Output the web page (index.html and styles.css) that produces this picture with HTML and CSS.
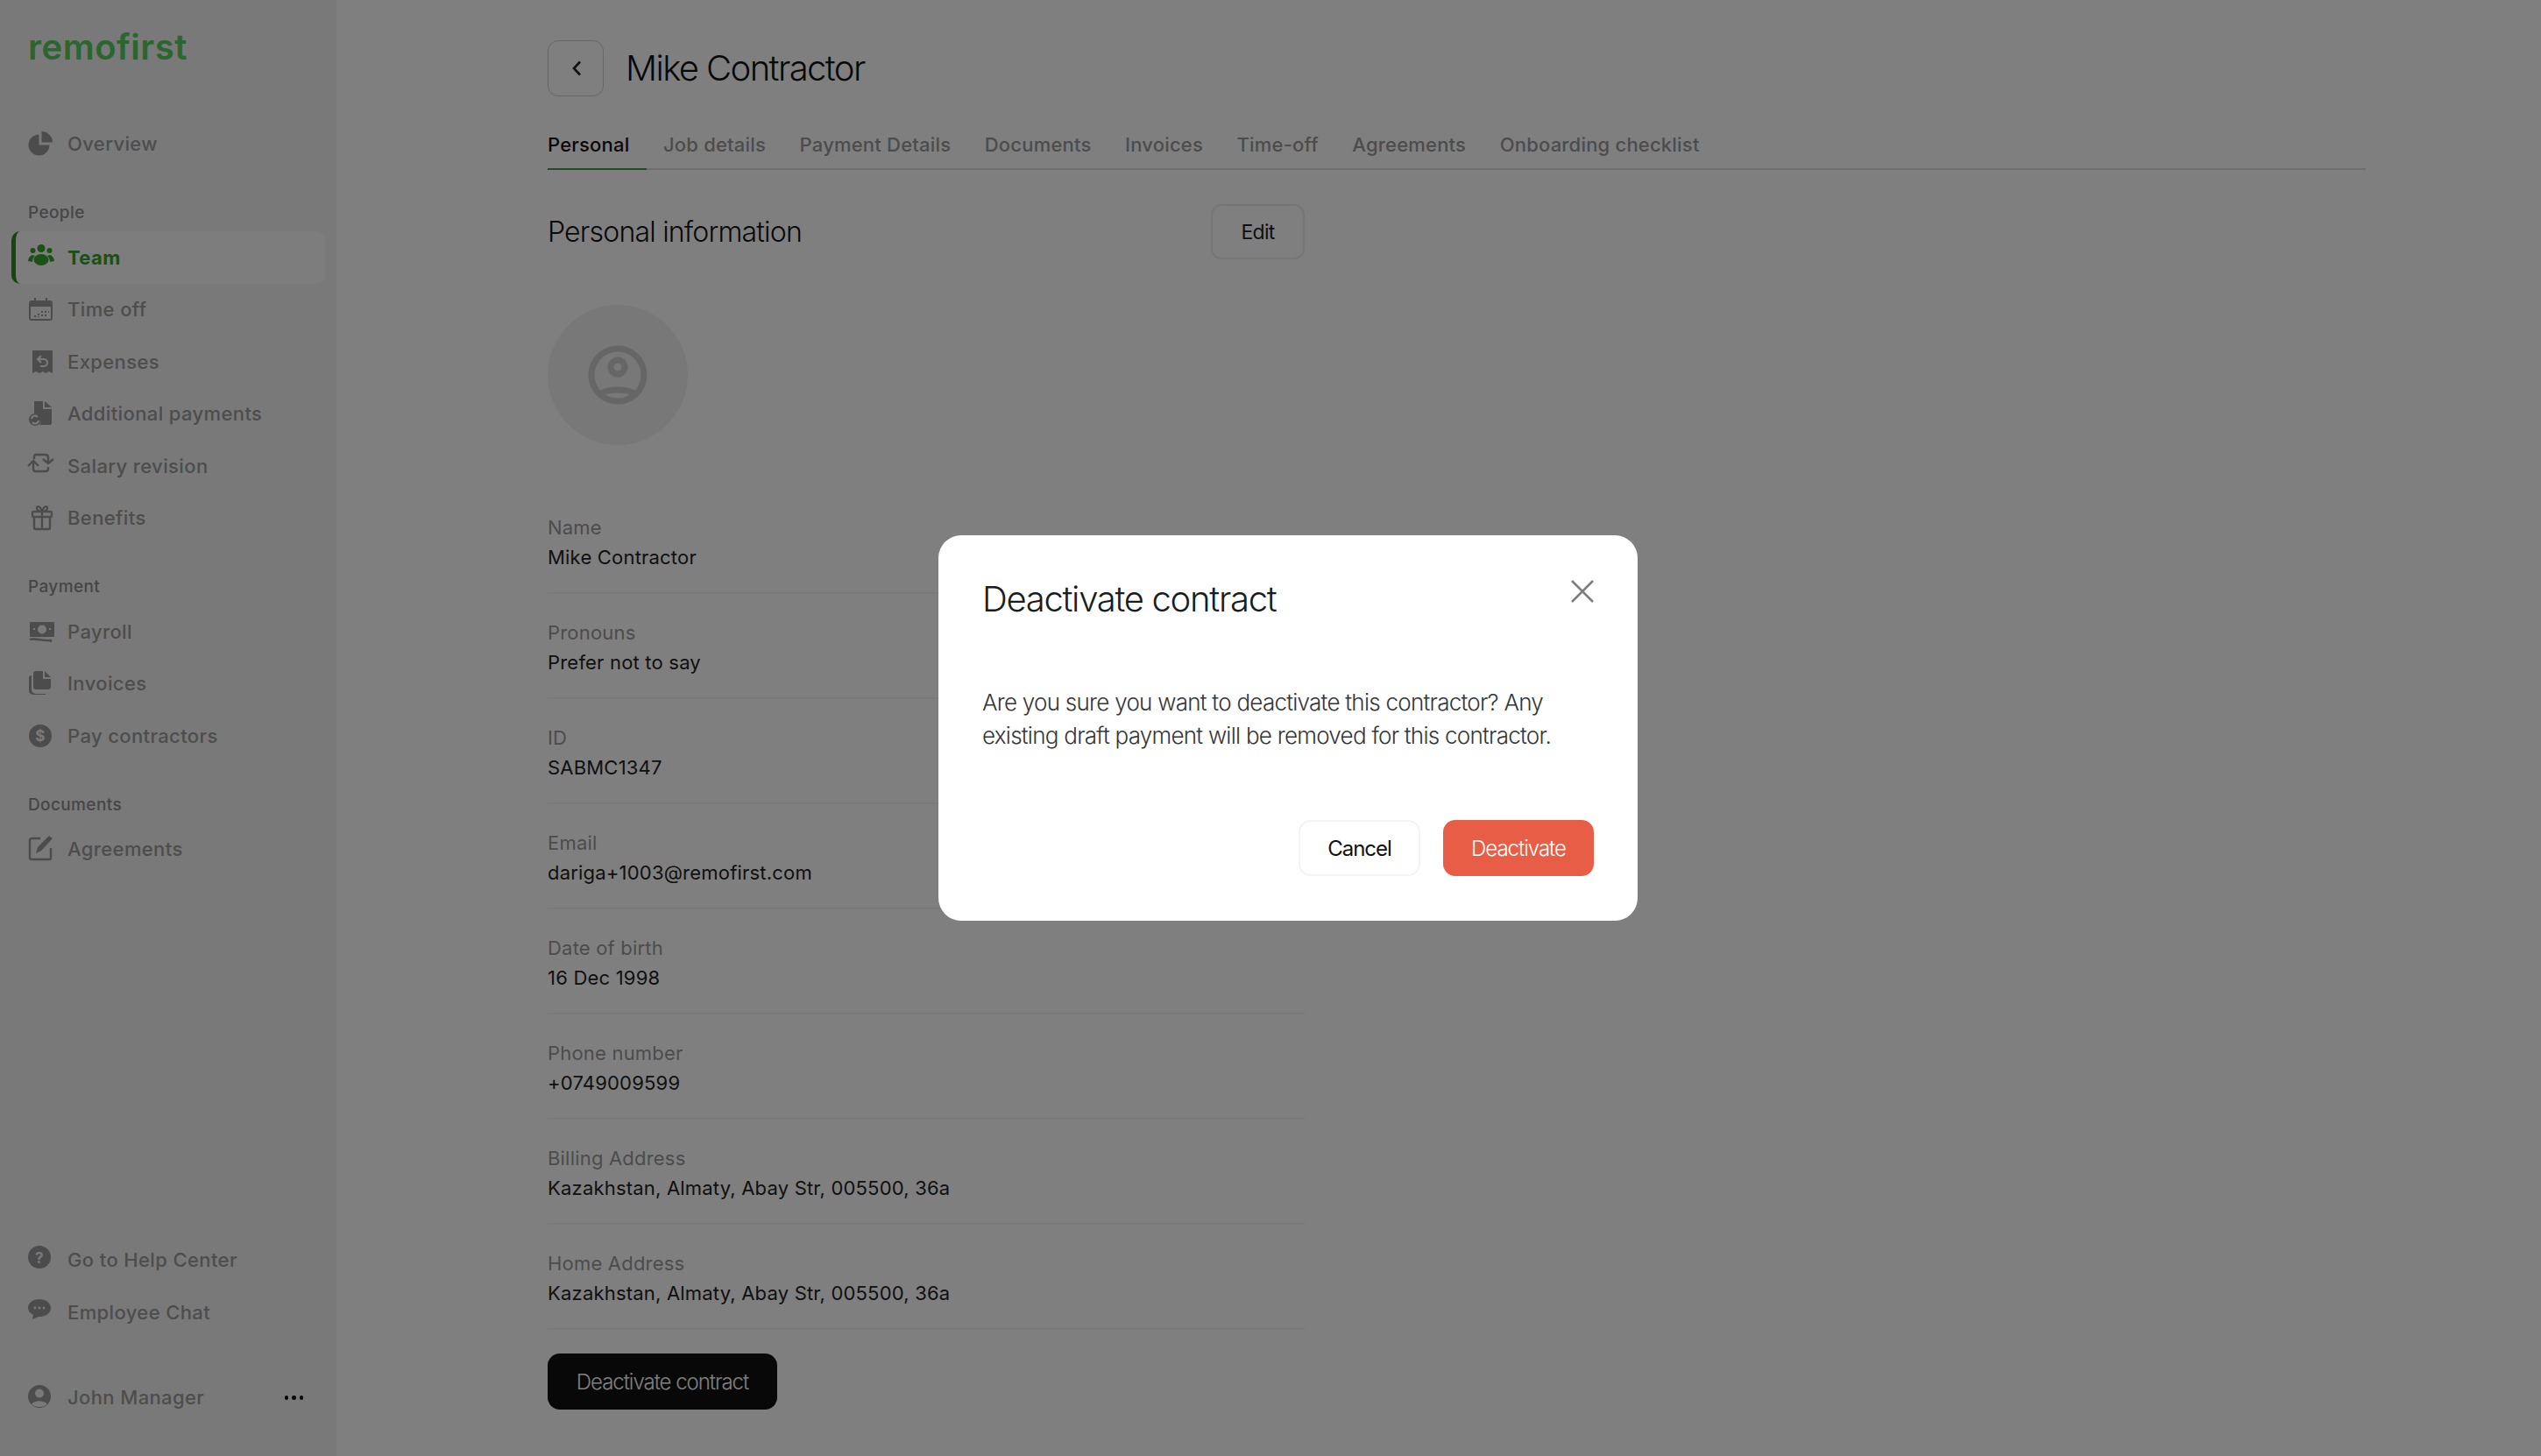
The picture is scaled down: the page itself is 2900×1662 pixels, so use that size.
FILE: index.html
```html
<!DOCTYPE html>
<html lang="en">
<head>
<meta charset="utf-8">
<title>Mike Contractor</title>
<link rel="stylesheet" href="styles.css">
</head>
<body>
<div class="app">
  <aside class="sidebar">
    <div class="logo">remofirst</div>
    <nav class="nav-group">
      <a class="nav-item"><svg class="ico" viewBox="0 0 32 32"><path d="M12.500 5.500a12 12 0 1 0 12 12h-12z"/><path d="M15.500 2a12.500 12.500 0 0 1 12.500 12.500H15.500z"/></svg>Overview</a>
    </nav>
    <nav class="nav-group spaced">
      <div class="nav-label">People</div>
      <a class="nav-item active"><svg class="ico" viewBox="0 0 32 32"><circle cx="15" cy="5.500" r="4.500"/><circle cx="5.500" cy="8" r="3"/><circle cx="24.500" cy="8" r="3"/><ellipse cx="15" cy="18.500" rx="8.500" ry="6.500"/><path d="M5 13c-3 1-5 4-5 7l5 1c0-3 1-5 3-7zM25 13c3 1 5 4 5 7l-5 1c0-3-1-5-3-7z"/></svg>Team</a>
      <a class="nav-item"><svg class="ico" viewBox="0 0 32 32"><path d="M7 3h2v3h11V3h2v3h3a3 3 0 0 1 3 3v17a3 3 0 0 1-3 3H4a3 3 0 0 1-3-3V9a3 3 0 0 1 3-3h3zM3 13v13a1 1 0 0 0 1 1h21a1 1 0 0 0 1-1V13z"/><path d="M7 23h2v2H7zM11 21h2v2h-2zM11 24h2v1h-2zM15 18h2v2h-2zM15 22h2v2h-2zM19 18h2v2h-2zM19 22h2v2h-2zM23 18h1v2h-1z"/></svg>Time off</a>
      <a class="nav-item"><svg class="ico" viewBox="0 0 32 32"><path d="M6 3h21a1 1 0 0 1 1 1v25l-4-2-4 2-3-2-4 2-4-2-4 2V4a1 1 0 0 1 1-1z"/><path class="cut" d="M15 9l-4 4 4 4M11 13h7a4 4 0 0 1 0 8h-4"/></svg>Expenses</a>
      <a class="nav-item"><svg class="ico" viewBox="0 0 32 32"><path d="M7 2h10v9h10v16a2 2 0 0 1-2 2H13a8 8 0 0 0-6-13z"/><path d="M19 2l8 7h-8z"/><circle cx="8" cy="23" r="7"/><path class="cut" d="M4 22a4 4 0 0 1 7-2M12 24a4 4 0 0 1-7 2"/></svg>Additional payments</a>
      <a class="nav-item"><svg class="ico line" viewBox="0 0 32 32"><path d="M7 8V5q0-2 2-2h11q3 0 3 3v7M17 8l6 5 6-5"/><path d="M6 11v8q0 3 3 3h11q3 0 3-3v-2M0 16l6-6 6 6"/></svg>Salary revision</a>
      <a class="nav-item"><svg class="ico line" viewBox="0 0 32 32"><rect x="5" y="9" width="22" height="6" rx="1.500"/><path d="M7 15v12a2 2 0 0 0 2 2h14a2 2 0 0 0 2-2V15M16 9v20M16 9c-3 0-6-1-6-4s4-3 6 4c2-7 6-7 6-4s-3 4-6 4z"/></svg>Benefits</a>
    </nav>
    <nav class="nav-group spaced">
      <div class="nav-label">Payment</div>
      <a class="nav-item"><svg class="ico" viewBox="0 0 32 32"><path fill-rule="evenodd" d="M3 5h26a1 1 0 0 1 1 1v15a1 1 0 0 1-1 1H3a1 1 0 0 1-1-1V6a1 1 0 0 1 1-1zm13 3.500a5 5 0 1 0 0 10 5 5 0 0 0 0-10zM6 12v2h2v-2zm18 0v2h2v-2z"/><path class="stroke-only" d="M2 25c6-2 14 2 24 1v2"/></svg>Payroll</a>
      <a class="nav-item"><svg class="ico" viewBox="0 0 32 32"><path d="M9 2h8v9h9v9a3 3 0 0 1-3 3H9a3 3 0 0 1-3-3V5a3 3 0 0 1 3-3z"/><path d="M19 2l7 7h-7z"/><path d="M4 7v16a5 5 0 0 0 5 5h11v1H6a5 5 0 0 1-5-5V10a3 3 0 0 1 3-3z"/></svg>Invoices</a>
      <a class="nav-item"><svg class="ico" viewBox="0 0 32 32"><circle cx="14" cy="16" r="13"/><text class="ico-text" x="14" y="22" text-anchor="middle">$</text></svg>Pay contractors</a>
    </nav>
    <nav class="nav-group spaced">
      <div class="nav-label">Documents</div>
      <a class="nav-item"><svg class="ico line" viewBox="0 0 32 32"><path d="M14 4H4a2 2 0 0 0-2 2v20a2 2 0 0 0 2 2h20a2 2 0 0 0 2-2V15"/><path class="solid" d="M24 1l4 3-13 14-6 3 2-7z"/></svg>Agreements</a>
    </nav>
    <nav class="nav-group bottom">
      <a class="nav-item"><svg class="ico" viewBox="0 0 32 32"><circle cx="13" cy="13" r="13"/><text class="ico-text" x="13" y="19.500" text-anchor="middle">?</text></svg>Go to Help Center</a>
      <a class="nav-item"><svg class="ico" viewBox="0 0 32 32"><path d="M13 1c7 0 13 4 13 10s-6 10-13 10h-1l-7 3 1-5C2 17 0 14 0 11 0 5 6 1 13 1z"/><circle class="cut-fill" cx="8" cy="11" r="1.400"/><circle class="cut-fill" cx="13" cy="11" r="1.400"/><circle class="cut-fill" cx="18" cy="11" r="1.400"/></svg>Employee Chat</a>
    </nav>
    <div class="user-row">
      <a class="nav-item"><svg class="ico" viewBox="0 0 32 32"><circle cx="13" cy="15" r="13"/><circle class="cut-fill" cx="13" cy="11.500" r="5"/><path class="cut-fill" d="M4 24c3-5 15-5 18 0-4 4-14 4-18 0z"/></svg>John Manager</a>
      <span class="more"><i></i><i></i><i></i></span>
    </div>
  </aside>

  <main class="main">
    <header class="page-head">
      <button class="back" type="button"><svg viewBox="0 0 24 24" width="24" height="24"><path d="M17 4.500L10 12l7 7.500" fill="none" stroke="#222" stroke-width="2.600"/></svg></button>
      <h1 class="page-title">Mike Contractor</h1>
    </header>
    <div class="tabs">
      <a class="tab current">Personal</a>
      <a class="tab">Job details</a>
      <a class="tab">Payment Details</a>
      <a class="tab">Documents</a>
      <a class="tab">Invoices</a>
      <a class="tab">Time-off</a>
      <a class="tab">Agreements</a>
      <a class="tab">Onboarding checklist</a>
    </div>
    <section class="info">
      <div class="info-head">
        <h2 class="info-title">Personal information</h2>
        <button class="edit" type="button">Edit</button>
      </div>
      <div class="avatar"><svg viewBox="0 0 68 68" width="68" height="68"><circle cx="34" cy="34" r="30" fill="none" stroke="#cccccc" stroke-width="7"/><circle cx="34" cy="25" r="8" fill="none" stroke="#cccccc" stroke-width="7"/><path d="M13 57c7-8 35-8 42 0" fill="none" stroke="#cccccc" stroke-width="7"/></svg></div>
      <div class="row"><div class="label">Name</div><div class="value">Mike Contractor</div></div>
      <div class="row"><div class="label">Pronouns</div><div class="value">Prefer not to say</div></div>
      <div class="row"><div class="label">ID</div><div class="value">SABMC1347</div></div>
      <div class="row"><div class="label">Email</div><div class="value">dariga+1003@remofirst.com</div></div>
      <div class="row"><div class="label">Date of birth</div><div class="value">16 Dec 1998</div></div>
      <div class="row"><div class="label">Phone number</div><div class="value">+0749009599</div></div>
      <div class="row"><div class="label">Billing Address</div><div class="value">Kazakhstan, Almaty, Abay Str, 005500, 36a</div></div>
      <div class="row"><div class="label">Home Address</div><div class="value">Kazakhstan, Almaty, Abay Str, 005500, 36a</div></div>
      <button class="btn-dark" type="button">Deactivate contract</button>
    </section>
  </main>
</div>

<div class="overlay">
  <div class="dialog">
    <div class="dialog-head">
      <h3 class="dialog-title">Deactivate contract</h3>
      <svg class="close" viewBox="0 0 26 26" width="26" height="26"><path d="M1 1l24 24M25 1L1 25" stroke="#7d7d7d" stroke-width="2.500" fill="none"/></svg>
    </div>
    <p class="dialog-text">Are you sure you want to deactivate this contractor? Any existing draft payment will be removed for this contractor.</p>
    <div class="dialog-actions">
      <button class="btn-cancel" type="button">Cancel</button>
      <button class="btn-danger" type="button">Deactivate</button>
    </div>
  </div>
</div>
</body>
</html>
```

FILE: styles.css
```css
* { box-sizing: border-box; }
html, body { margin: 0; height: 100%; }
body { font-family: Inter, "Liberation Sans", sans-serif; background: #fff; color: #222; overflow: hidden; }
.app { display: flex; height: 1662px; }

.sidebar { width: 384px; flex: none; background: #f2f2f2; padding: 0 13px; display: flex; flex-direction: column; }
.logo { height: 134px; padding: 24px 0 0 19px; font-size: 40px; line-height: 60px; font-weight: 600; color: #56cc5c; letter-spacing: 0.5px; }
.nav-group.spaced { margin-top: 33px; }
.nav-group.bottom { margin-top: auto; }
.nav-label { height: 30px; margin: 0 0 7px 19px; font-size: 19px; line-height: 32px; font-weight: 500; color: #8c8c8c; letter-spacing: 0.38px; }
.nav-item { display: flex; align-items: center; height: 59.5px; padding-left: 19px; font-size: 22px; font-weight: 500; color: #9a9a9a; letter-spacing: 0.38px; }
.nav-item.active { color: #37a02c; font-weight: 700; background: #fafafa; border-radius: 10px; border-left: 5px solid #2f8a25; padding-left: 14px; height: 60px; }
.ico { width: 32px; height: 32px; flex: none; margin-right: 13px; fill: currentColor; overflow: visible; }
.nav-item:not(.active) .ico { color: #999; }
.ico.line { fill: none; stroke: currentColor; stroke-width: 2.4; }
.ico .solid { fill: currentColor; stroke: none; }
.ico .cut { fill: none; stroke: #f2f2f2; stroke-width: 2.2; }
.ico .stroke-only { fill: none; stroke: currentColor; stroke-width: 2.4; }
.ico .cut-fill { fill: #f2f2f2; }
.ico-text { font-family: Inter, sans-serif; font-size: 17px; font-weight: 700; fill: #f2f2f2; }
.user-row { display: flex; align-items: center; justify-content: space-between; margin-top: 38px; margin-bottom: 37px; padding-right: 25px; }
.more { display: flex; gap: 4px; }
.more i { width: 4.500px; height: 4.500px; border-radius: 50%; background: #111; display: block; }

.main { flex: 1; padding: 46px 200px 0 241px; min-width: 0; }
.page-head { display: flex; align-items: center; gap: 25px; height: 64px; }
.back { width: 64px; height: 64px; padding: 0; display: flex; align-items: center; justify-content: center; background: #fff; border: 1.500px solid #cfcfcf; border-radius: 12px; }
.page-title { margin: 0; font-size: 40px; font-weight: 350; letter-spacing: -1.6px; color: #111; line-height: 64px; }
.tabs { display: flex; gap: 18.5px; margin-top: 24px; height: 60px; border-bottom: 2px solid #dcdcdc; }
.tab { padding: 9px 20px 0 0; height: 60px; line-height: 45px; font-size: 22px; font-weight: 500; color: #999; white-space: nowrap; letter-spacing: 0.2px; }
.tab.current { color: #111; border-bottom: 2px solid #3f9a3a; }

.info { width: 864px; }
.info-head { display: flex; align-items: center; justify-content: space-between; margin-top: 39px; height: 63px; }
.info-title { margin: 0; font-size: 32px; font-weight: 350; letter-spacing: -0.8px; color: #111; }
.edit { width: 107px; height: 63px; font: 400 23px Inter, sans-serif; letter-spacing: -0.8px; color: #222; background: #fff; border: 2px solid #ececec; border-radius: 12px; }
.avatar { width: 160px; height: 160px; margin-top: 52px; margin-bottom: 50px; border-radius: 50%; background: #f0f0f0; display: flex; align-items: center; justify-content: center; }
.row { height: 120px; padding-top: 27px; border-bottom: 2px solid #f4f4f4; }
.label { font-size: 22px; line-height: 34px; color: #999; letter-spacing: 0.2px; }
.value { font-size: 22px; line-height: 34px; color: #222; letter-spacing: 0.2px; }
.btn-dark { margin-top: 27px; width: 262px; height: 64px; border: 0; border-radius: 14px; background: #111; color: #fff; font: 300 24px Inter, sans-serif; letter-spacing: -1.04px; }

.overlay { position: fixed; inset: 0; background: rgba(0,0,0,.5); display: flex; align-items: center; justify-content: center; padding-left: 40px; }
.dialog { width: 798px; height: 440px; padding: 50px; background: #fff; border-radius: 26px; display: flex; flex-direction: column; }
.dialog-head { display: flex; justify-content: space-between; height: 50px; }
.dialog-title { margin: 0; font-size: 40px; line-height: 46px; font-weight: 350; letter-spacing: -1.3px; color: #1a1d20; }
.close { margin-top: 1px; }
.dialog-text { margin: 72px 0 0; font-size: 26px; line-height: 38px; font-weight: 300; letter-spacing: -0.74px; color: #33363a; }
.dialog-actions { margin-top: auto; display: flex; justify-content: flex-end; gap: 26px; margin-bottom: 1px; }
.btn-cancel, .btn-danger { height: 64px; border-radius: 14px; font: 400 24px Inter, sans-serif; letter-spacing: -1px; }
.btn-cancel { width: 139px; background: #fff; border: 2px solid #f3f3f3; color: #111; }
.btn-danger { width: 172px; background: #e75d45; border: 0; color: #fff; font-weight: 300; }
```
